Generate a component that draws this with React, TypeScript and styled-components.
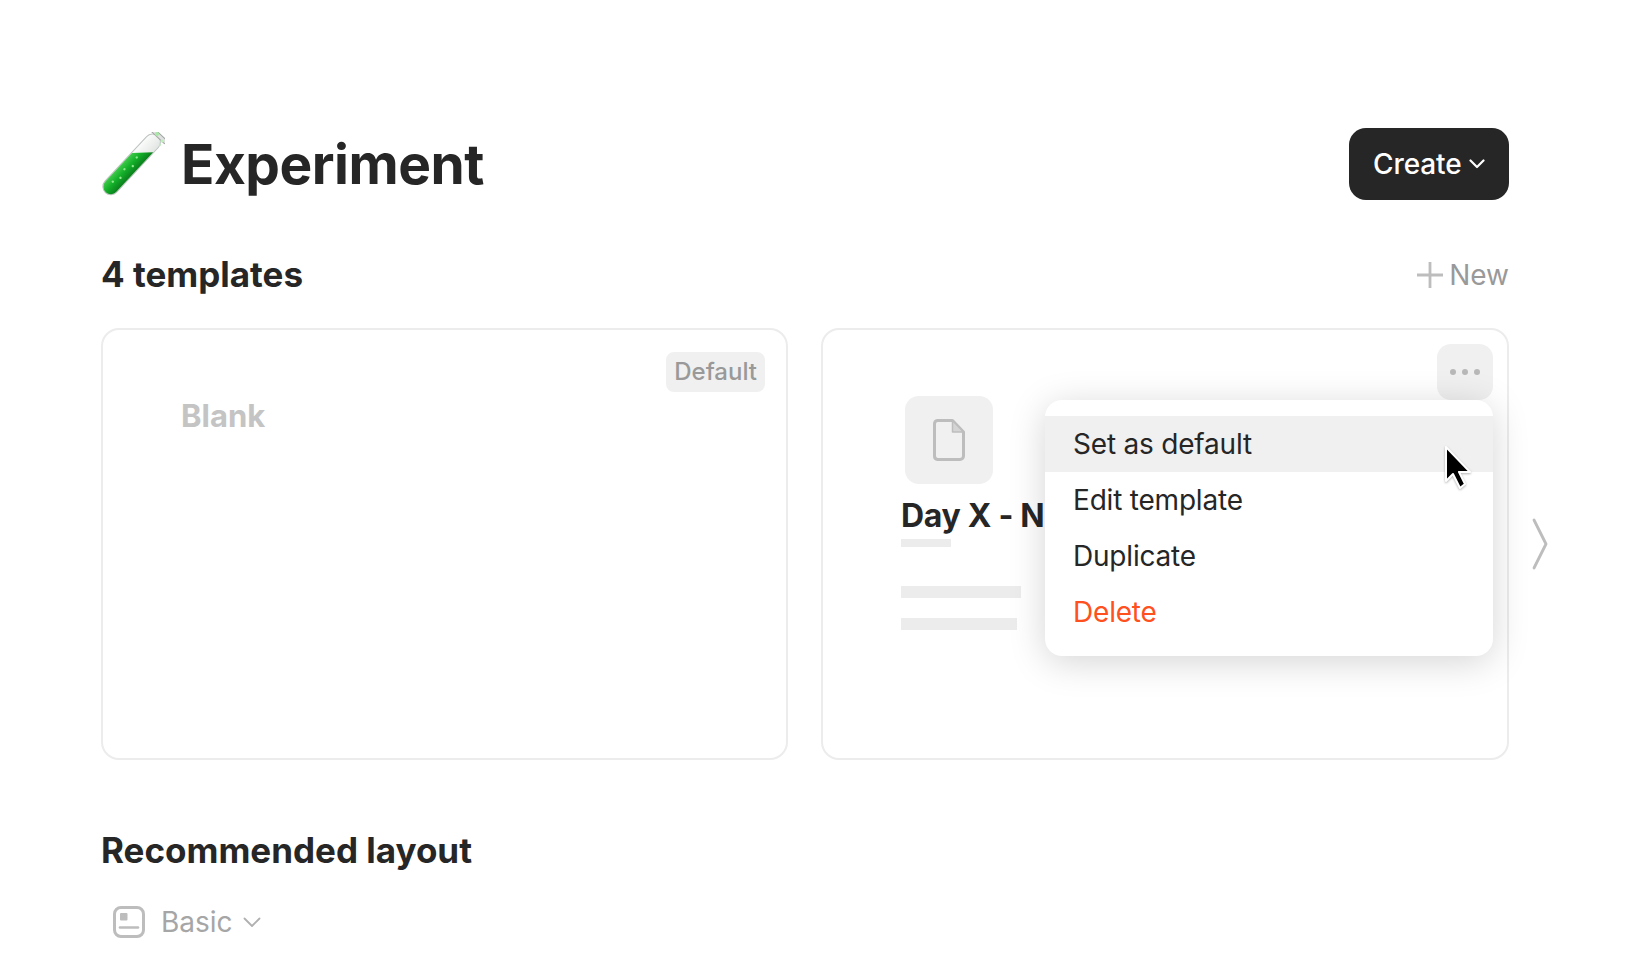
import React from 'react';
import styled, { createGlobalStyle } from 'styled-components';

const GlobalStyle = createGlobalStyle`
  html, body {
    margin: 0;
    padding: 0;
    background: #ffffff;
    color: #262626;
    font-family: Inter, "Liberation Sans", sans-serif;
    overflow: hidden;
  }
`;

const Page = styled.div`
  width: 1510px;
  height: 980px;
  padding: 128px 0 0 101px;
  box-sizing: border-box;
`;

const Header = styled.header`
  display: flex;
  align-items: center;
  justify-content: space-between;
  height: 72px;
  padding-right: 1px;
`;

const TitleGroup = styled.div`
  display: flex;
  align-items: center;
  gap: 16px;
`;

const Title = styled.h1`
  margin: 0;
  font-size: 55px;
  line-height: 64px;
  font-weight: 700;
  letter-spacing: -0.5px;
`;

const CreateButton = styled.button`
  display: flex;
  align-items: center;
  gap: 7px;
  width: 160px;
  height: 72px;
  padding: 0 0 0 24px;
  border: 0;
  border-radius: 17px;
  background: #262626;
  color: #ffffff;
  font: 500 28px Inter, sans-serif;
  letter-spacing: -0.1px;
`;

const SectionHead = styled.div`
  display: flex;
  align-items: center;
  justify-content: space-between;
  height: 38px;
  margin-top: 56px;
  padding-right: 1px;
`;

const SectionTitle = styled.h2`
  margin: 0;
  font-size: 35px;
  line-height: 38px;
  font-weight: 700;
  letter-spacing: 0;
`;

const CountTitle = styled(SectionTitle)`
  line-height: 36px;
  margin-bottom: 2px;
`;

const NewButton = styled.div`
  display: flex;
  align-items: center;
  gap: 6px;
  color: #999999;
  font-size: 28px;
  line-height: 38px;
`;

const Carousel = styled.div`
  position: relative;
  display: grid;
  grid-template-columns: 687px 688px;
  gap: 33px;
  margin-top: 34px;
`;

const Card = styled.div`
  position: relative;
  height: 432px;
  box-sizing: border-box;
  padding: 66px 0 0 78px;
  border: 2px solid #ececec;
  border-radius: 18px;
  background: #ffffff;
`;

const BlankName = styled.div`
  color: #c4c4c4;
  font-size: 31px;
  line-height: 40px;
  font-weight: 700;
`;

const DefaultTag = styled.span`
  position: absolute;
  top: 22px;
  right: 21px;
  padding: 0 8px;
  height: 40px;
  line-height: 40px;
  border-radius: 8px;
  background: #f0f0f0;
  color: #999999;
  font-size: 24px;
  font-weight: 500;
`;

const IconTile = styled.div`
  display: flex;
  align-items: center;
  justify-content: center;
  width: 88px;
  height: 88px;
  margin-left: 4px;
  border-radius: 14px;
  background: #f0f0f0;
`;

const CardName = styled.div`
  margin-top: 10px;
  height: 44px;
  font-size: 32px;
  line-height: 44px;
  font-weight: 700;
  letter-spacing: -0.3px;
  white-space: nowrap;
`;

const Skeleton = styled.div<{ $width: number; $height: number; $top: number }>`
  width: ${(p) => p.$width}px;
  height: ${(p) => p.$height}px;
  margin-top: ${(p) => p.$top}px;
  background: #ececec;
`;

const DotsButton = styled.div`
  position: absolute;
  top: 14px;
  right: 14px;
  display: flex;
  align-items: center;
  justify-content: center;
  gap: 6px;
  width: 56px;
  height: 56px;
  border-radius: 14px;
  background: #f0f0f0;
`;

const Dot = styled.span`
  width: 6px;
  height: 6px;
  border-radius: 50%;
  background: #b8b8b8;
`;

const Menu = styled.ul`
  position: absolute;
  top: 70px;
  right: 14px;
  width: 448px;
  margin: 0;
  padding: 16px 0;
  list-style: none;
  border-radius: 17px;
  background: #ffffff;
  box-shadow: 0 6px 36px rgba(0, 0, 0, 0.17);
`;

const MenuItem = styled.li<{ $active?: boolean; $danger?: boolean }>`
  height: 56px;
  padding-left: 28px;
  background: ${(p) => (p.$active ? '#f0f0f0' : 'transparent')};
  color: ${(p) => (p.$danger ? '#ff5020' : '#262626')};
  font-size: 28px;
  letter-spacing: -0.2px;
  line-height: 57px;
`;

const Pointer = styled.svg`
  position: absolute;
  top: 115px;
  right: 35px;
  filter: drop-shadow(0 1px 1px rgba(0, 0, 0, 0.3));
`;

const NextArrow = styled.svg`
  position: absolute;
  top: 190px;
  left: 1431px;
`;

const LayoutTitle = styled(SectionTitle)`
  margin-top: 71px;
`;

const LayoutPicker = styled.div`
  display: flex;
  align-items: center;
  height: 32px;
  margin: 37px 0 0 12px;
  color: #a6a6a6;
  font-size: 28px;
  line-height: 32px;
`;

const LayoutName = styled.span`
  margin: 0 10px 0 16px;
`;

const TestTube = () => (
  <svg width="64" height="64" viewBox="0 0 64 64">
    <defs>
      <linearGradient id="liquid" x1="0" x2="1" y1="0" y2="0">
        <stop offset="0" stopColor="#3fc94a" />
        <stop offset="0.45" stopColor="#14b02a" />
        <stop offset="1" stopColor="#0a801c" />
      </linearGradient>
      <linearGradient id="glass" x1="0" x2="1" y1="0" y2="0">
        <stop offset="0" stopColor="#fbfcfb" />
        <stop offset="1" stopColor="#e2e6e3" />
      </linearGradient>
    </defs>
    <g transform="rotate(43 31 32)">
      <rect x="23" y="-6" width="16" height="77" rx="8" fill="url(#glass)" stroke="#bcc2be" strokeWidth="1" />
      <path d="M23.5 24 L38.5 9 V63 a7.5 7.5 0 0 1 -15 0 Z" fill="url(#liquid)" />
      <rect x="20" y="-9" width="22" height="4" rx="2" fill="#dfe1e0" stroke="#a2a6a3" strokeWidth="1" />
      <circle cx="30" cy="24" r="1.2" fill="#8fe88c" />
      <circle cx="33" cy="33" r="1.2" fill="#8fe88c" />
      <circle cx="29" cy="41" r="1.2" fill="#8fe88c" />
      <circle cx="32" cy="50" r="1.2" fill="#8fe88c" />
      <circle cx="29" cy="58" r="1.2" fill="#8fe88c" />
    </g>
    <circle cx="56" cy="2" r="2" fill="#a8e8a6" />
    <circle cx="61" cy="9" r="1.5" fill="#bdeebb" />
    <circle cx="59" cy="13" r="1" fill="#bdeebb" />
  </svg>
);

const App: React.FC = () => {
  return (
    <Page>
      <GlobalStyle />
      <Header>
        <TitleGroup>
          <TestTube />
          <Title>Experiment</Title>
        </TitleGroup>
        <CreateButton>
          Create
          <svg width="16" height="10" viewBox="0 0 16 10" fill="none" stroke="#fff" strokeWidth="2.2" strokeLinecap="round" strokeLinejoin="round">
            <path d="M1.5 1.5 8 8l6.5-6.5" />
          </svg>
        </CreateButton>
      </Header>

      <SectionHead>
        <CountTitle>4 templates</CountTitle>
        <NewButton>
          <svg width="26" height="26" viewBox="0 0 26 26" fill="none" stroke="#bdbdbd" strokeWidth="2.8">
            <path d="M13 0v26M0 13h26" />
          </svg>
          New
        </NewButton>
      </SectionHead>

      <Carousel>
        <Card>
          <DefaultTag>Default</DefaultTag>
          <BlankName>Blank</BlankName>
        </Card>
        <Card>
          <IconTile>
            <svg width="32" height="42" viewBox="0 0 32 42" fill="none" stroke="#bdbdbd" strokeWidth="3" strokeLinejoin="round">
              <path d="M4.5 1.5h15L30.5 13v24a3.5 3.5 0 0 1-3.5 3.5H4.5A3.5 3.5 0 0 1 1.5 37V5a3.5 3.5 0 0 1 3-3.5Z" />
              <path d="M19.5 1.5V13h11Z" fill="#d4d4d4" strokeWidth="1.5" />
            </svg>
          </IconTile>
          <CardName>Day X - Notes</CardName>
          <Skeleton $width={50} $height={8} $top={1} />
          <Skeleton $width={120} $height={12} $top={39} />
          <Skeleton $width={116} $height={12} $top={20} />
          <DotsButton>
            <Dot />
            <Dot />
            <Dot />
          </DotsButton>
          <Menu>
            <MenuItem $active>Set as default</MenuItem>
            <MenuItem>Edit template</MenuItem>
            <MenuItem>Duplicate</MenuItem>
            <MenuItem $danger>Delete</MenuItem>
          </Menu>
          <Pointer width="28" height="46" viewBox="0 0 28 46">
            <path d="M2 2v34l7-7 7 14 5-4-6-12h11Z" fill="#000" stroke="#fff" strokeWidth="2" strokeLinejoin="round" />
          </Pointer>
        </Card>
        <NextArrow width="16" height="52" viewBox="0 0 16 52" fill="none" stroke="#bdbdbd" strokeWidth="2.8" strokeLinecap="round" strokeLinejoin="round">
          <path d="M2 2 14 26 2 50" />
        </NextArrow>
      </Carousel>

      <LayoutTitle>Recommended layout</LayoutTitle>
      <LayoutPicker>
        <svg width="32" height="32" viewBox="0 0 32 32" fill="none" stroke="#bdbdbd" strokeWidth="3">
          <rect x="1.5" y="1.5" width="29" height="29" rx="6.5" />
          <rect x="7" y="7" width="7.5" height="7.5" rx="1" fill="#bdbdbd" stroke="none" />
          <path d="M7 21.5h18" strokeWidth="2.6" strokeLinecap="round" />
        </svg>
        <LayoutName>Basic</LayoutName>
        <svg width="18" height="11" viewBox="0 0 18 11" fill="none" stroke="#b0b0b0" strokeWidth="1.8" strokeLinecap="round" strokeLinejoin="round">
          <path d="M1.5 1.5 9 9l7.5-7.5" />
        </svg>
      </LayoutPicker>
    </Page>
  );
};

export default App;
